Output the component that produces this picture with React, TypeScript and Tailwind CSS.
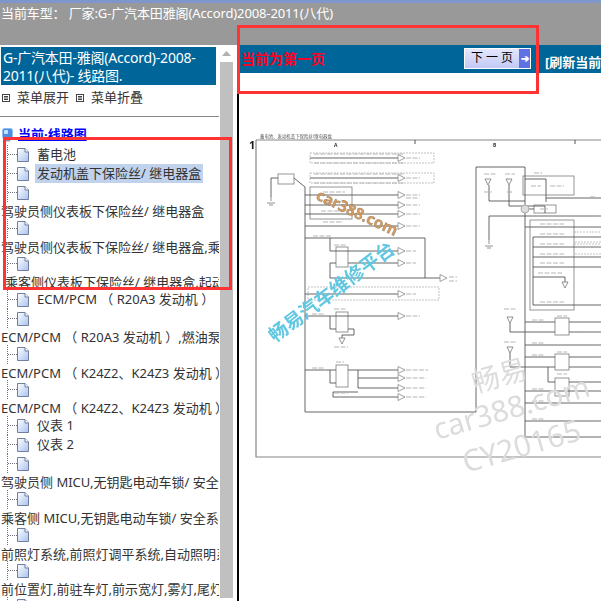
import React from "react";

type Row = {
  text?: string; // label beside the page icon
  below?: string; // long label that drops under the icon
  indent?: string;
  active?: boolean;
};

const rows: Row[] = [
  { text: "蓄电池" },
  { text: "发动机盖下保险丝/ 继电器盒", active: true },
  { below: "驾驶员侧仪表板下保险丝/ 继电器盒" },
  { below: "驾驶员侧仪表板下保险丝/ 继电器盒,乘客侧仪表板" },
  { below: "乘客侧仪表板下保险丝/ 继电器盒,起动机", indent: "pl-[5px]" },
  { text: "ECM/PCM （ R20A3 发动机 ）" },
  { below: "ECM/PCM （ R20A3 发动机 ）,燃油泵" },
  { below: "ECM/PCM （ K24Z2、K24Z3 发动机 ）" },
  { below: "ECM/PCM （ K24Z2、K24Z3 发动机 ）,燃油泵" },
  { text: "仪表 1" },
  { text: "仪表 2" },
  { below: "驾驶员侧 MICU,无钥匙电动车锁/ 安全系统" },
  { below: "乘客侧 MICU,无钥匙电动车锁/ 安全系统" },
  { below: "前照灯系统,前照灯调平系统,自动照明系统" },
  { below: "前位置灯,前驻车灯,前示宽灯,雾灯,尾灯" },
  {},
];

const PageIcon = () => (
  <svg width="12" height="14" viewBox="0 0 12 14" className="shrink-0">
    <defs>
      <linearGradient id="pg" x1="0" y1="0" x2="1" y2="1">
        <stop offset="0" stopColor="#ffffff" />
        <stop offset="1" stopColor="#a9c2f0" />
      </linearGradient>
    </defs>
    <path d="M0.5 0.5H8L11.5 4V13.5H0.5Z" fill="url(#pg)" stroke="#6f7f9c" />
    <path d="M8 0.5V4H11.5" fill="#ffffff" stroke="#6f7f9c" />
  </svg>
);

const BoxIcon = () => (
  <svg width="8" height="8" viewBox="0 0 8 8" className="shrink-0">
    <rect x="0.5" y="0.5" width="7" height="7" fill="#fff" stroke="#444" />
    <path d="M2 2.5H6M2 4H6M2 5.5H6" stroke="#444" />
  </svg>
);

const RootIcon = () => (
  <svg width="11" height="14" viewBox="0 0 11 14" className="shrink-0">
    <rect x="0.5" y="0.5" width="10" height="10" rx="2" fill="#4c8fe0" stroke="#8fbcf0" />
    <rect x="2" y="2" width="4" height="4" rx="1" fill="#c4e0fb" />
    <path d="M2 10.5L4 13.5H8L9 10.5Z" fill="#8a9bb0" />
  </svg>
);

// wires of the schematic, in page coordinates
const darkWires = [
  "M277 178H270V197",
  "M293 178L304 187V412H475V167H524V437H601",
  "M309 158H397M309 178H397",
  "M304 195H397M304 205H397M304 214H397M304 226H397",
  "M304 238H424V278H329V263H335M329 238V251H397M347 263H397M424 278H439",
  "M304 294H397M304 316H397M329 316V329H335M347 329H353V335H341V338",
  "M304 370H335M329 370V383H335M347 370H397M357 370V388H397M357 378H397M332 397H397M332 397V392H357",
  "M488 185V201H524M508 185V206H544V213M524 179H545V202M545 198H601",
  "M524 209H533M488 240V216H601M524 227H601M532 237H601M532 247H601M532 257H601M532 267H601M532 277H564V282M532 305H601M532 237V305",
  "M509 323V332H554M524 322H554M568 322H601M568 332H601M524 345H601",
  "M509 353V367H554M524 357H554M568 357H601M568 367H601M547 367V382H554M568 382H601M524 391H601M524 403H601M524 421H601",
];

const boxes = [
  [277, 174, 16, 10],
  [309, 187, 42, 32],
  [335, 247, 12, 20],
  [335, 312, 12, 20],
  [335, 365, 12, 22],
  [522, 176, 51, 19],
  [533, 205, 22, 8],
  [529, 220, 44, 90],
  [554, 318, 14, 17],
  [554, 354, 14, 16],
  [554, 378, 14, 18],
];

const dashed = [
  [309, 153, 124, 10],
  [309, 173, 124, 10],
  [307, 287, 131, 13],
  [537, 232, 64, 10],
  [537, 244, 64, 10],
];

// connector arrows at the right of the left block
const arrows = [
  [397, 158], [397, 178], [397, 195], [397, 205], [397, 214], [397, 226],
  [397, 251], [397, 263], [397, 294], [397, 316], [397, 370], [397, 378],
  [397, 388], [397, 397], [439, 278],
];

const grounds = [
  [341, 338], [564, 282], [487, 179], [508, 179], [509, 317], [509, 347],
];

// the tiny unreadable captions of the drawing are only grey dashes
const captions = [
  [313, 154, 90], [313, 163, 90], [313, 174, 90], [313, 183, 90],
  [322, 192, 22], [322, 202, 24], [320, 211, 22], [322, 222, 20], [312, 236, 18],
  [372, 158, 8], [372, 178, 8], [372, 195, 8], [372, 205, 8], [372, 214, 8], [372, 226, 8], [372, 238, 8],
  [405, 158, 14], [405, 178, 14], [405, 195, 14], [405, 198, 12], [405, 205, 14], [405, 214, 14], [405, 226, 14],
  [405, 251, 10], [405, 263, 10], [405, 294, 10], [405, 316, 14], [405, 370, 22], [405, 378, 20], [405, 388, 20], [405, 397, 20],
  [311, 314, 12], [311, 368, 12], [333, 393, 14], [333, 245, 12], [333, 309, 12], [335, 362, 8],
  [333, 347, 14], [448, 277, 8], [448, 281, 8],
  [483, 174, 12], [504, 174, 10], [533, 173, 8], [530, 186, 10], [549, 186, 14],
  [483, 192, 8], [506, 192, 6], [539, 209, 8], [590, 216, 8], [589, 197, 6],
  [539, 224, 24], [539, 234, 24], [539, 244, 24], [539, 254, 24], [539, 263, 24], [537, 273, 24], [539, 302, 24],
  [503, 309, 12], [503, 342, 12], [531, 320, 12], [531, 343, 12], [531, 355, 12], [531, 389, 12], [531, 401, 12], [531, 419, 12],
  [556, 316, 10], [556, 352, 10], [556, 374, 10], [590, 322, 8], [590, 332, 8], [590, 345, 8], [590, 357, 8], [590, 367, 8], [590, 382, 8], [590, 391, 8], [590, 403, 8], [590, 421, 8],
];

const Diagram = () => (
  <svg
    width="363"
    height="508"
    viewBox="238 93 363 508"
    className="block blur-[0.5px]"
  >
    <text x="259" y="138" fontSize="4.4" fill="#555">
      蓄电池、发动机盖下保险丝/继电器盒
    </text>
    <path d="M255 140H601M255 140V457H601" fill="none" stroke="#888" strokeWidth="1.2" />
    <text x="248" y="149" fontSize="11" fontWeight="700" fill="#222">1</text>
    <text x="333" y="147" fontSize="5" fontWeight="700" fill="#333">A</text>
    <text x="492" y="147" fontSize="5" fontWeight="700" fill="#333">B</text>
    <path d="M414 140V144M574 140V144" stroke="#555" />
    {dashed.map(([x, y, w, h]) => (
      <rect key={`${x}-${y}`} x={x} y={y} width={w} height={h} fill="none" stroke="#aaa" strokeWidth="0.7" strokeDasharray="2 1" />
    ))}
    {boxes.map(([x, y, w, h]) => (
      <rect key={`${x}-${y}`} x={x} y={y} width={w} height={h} fill="#fff" stroke="#8a8a8a" strokeWidth="0.9" />
    ))}
    {darkWires.map((d) => (
      <path key={d} d={d} fill="none" stroke="#555" strokeWidth="0.9" />
    ))}
    {arrows.map(([x, y]) => (
      <path key={`${x}-${y}`} d={`M${x} ${y - 3.5}L${x + 7} ${y}L${x} ${y + 3.5}Z`} fill="#fff" stroke="#888" strokeWidth="0.8" />
    ))}
    {grounds.map(([x, y]) => (
      <path key={`${x}-${y}`} d={`M${x - 3} ${y}H${x + 3}L${x} ${y + 6}Z`} fill="#fff" stroke="#777" strokeWidth="0.8" />
    ))}
    <circle cx="524" cy="209" r="4" fill="#ddd" stroke="#aaa" />
    <path d="M270 197v4M266 203h8M268 205h4M488 240v4M484 246h8M486 248h4" stroke="#777" strokeWidth="0.8" />
    {captions.map(([x, y, w]) => (
      <path key={`${x}-${y}`} d={`M${x} ${y}h${w}`} stroke="#b5b5b5" strokeWidth="1.2" strokeDasharray="5 1.5" />
    ))}

    {/* watermarks */}
    <text transform="translate(314 199) rotate(25)" fontSize="15.5" fontWeight="700" fill="#d39a5e" stroke="#8a7a6a" strokeWidth="0.3">
      car388.com
    </text>
    <text transform="translate(274 343) rotate(-37)" fontSize="19" fontWeight="700" fill="#62c8e2">
      畅易汽车维修平台
    </text>
    <g fill="#dcdcdc">
      <text transform="translate(474 393) rotate(-16)" fontSize="28">畅易</text>
      <text transform="translate(436 440) rotate(-16)" fontSize="29.5">car388.com</text>
      <text transform="translate(465 473) rotate(-16)" fontSize="30">CY20165</text>
    </g>
  </svg>
);

const TreeRow = ({ row }: { row: Row }) => (
  <div>
    <div className="flex h-[19px] items-center pl-[7px]">
      <div className="h-full w-[1px] border-l border-dotted border-gray-500" />
      <div className="w-[9px] border-t border-dotted border-gray-500" />
      <PageIcon />
      {row.text && (
        <span
          className={`ml-[6px] flex h-[19px] items-center px-[2px] whitespace-nowrap ${
            row.active ? "bg-[#c0d2ec]" : ""
          }`}
        >
          {row.text}
        </span>
      )}
    </div>
    {row.below && (
      <div className={`h-[16.7px] leading-[18px] whitespace-nowrap ${row.indent ?? "pl-[1px]"}`}>
        {row.below}
      </div>
    )}
  </div>
);

const App = () => {
  return (
    <div className="relative flex h-[601px] w-[601px] flex-col overflow-hidden bg-white text-[13px] text-[#333] [font-family:'Noto_Sans','Noto_Sans_CJK_SC',sans-serif]">
      {/* Top strip */}
      <div className="h-[45px] shrink-0 bg-[#999999]">
        <div className="h-[3px] bg-[#7f96cc]" />
        <div className="pt-[2px] pl-[1px] leading-[17px] tracking-[-0.12px] text-white">
          当前车型： 厂家:G-广汽本田雅阁(Accord)2008-2011(八代)
        </div>
      </div>

      <div className="flex min-h-0 flex-1">
        {/* Left menu */}
        <div className="flex w-[237px] shrink-0">
          <div className="w-[219px] shrink-0 overflow-hidden">
            <div className="mt-[2px] ml-[1px] h-[38px] w-[215px] bg-[#006699] pt-[2px] pl-[2px] text-[14px] leading-[18px] tracking-[-0.22px] text-white">
              G-广汽本田-雅阁(Accord)-2008-
              <br />
              2011(八代)- 线路图.
            </div>
            <div className="mt-[3px] flex h-[20px] items-center pl-[2px]">
              <BoxIcon />
              <span className="ml-[7px]">菜单展开</span>
              <span className="ml-[7px]"><BoxIcon /></span>
              <span className="ml-[7px]">菜单折叠</span>
            </div>
            <div className="mt-[8px] h-[1px] bg-[#888888]" />
            <div className="mt-[10px] flex h-[16px] items-center pl-[2px]">
              <RootIcon />
              <span className="ml-[5px] font-bold text-[#0000ff] underline">当前·线路图</span>
            </div>
            <div className="mt-[2px]">
              {rows.map((row, i) => (
                <TreeRow key={i} row={row} />
              ))}
            </div>
          </div>
          {/* Scrollbar */}
          <div className="ml-[1px] flex w-[13px] flex-col items-center">
            <div className="flex h-[17px] items-center text-[#aaa]">
              <svg width="9" height="5" viewBox="0 0 9 5">
                <path d="M4.5 0L9 5H0Z" fill="#b0b0b0" />
              </svg>
            </div>
            <div className="h-[536px] w-full bg-[#c0c0c0]" />
          </div>
        </div>
        <div className="w-[2px] shrink-0 bg-black" />

        {/* Right page */}
        <div className="min-w-0 flex-1 overflow-hidden">
          <div className="flex h-[28px] items-start bg-[#006699] pl-[2px] whitespace-nowrap">
            <span className="mt-[3px] w-[223px] shrink-0 text-[14px] font-bold text-[#ff0022]">当前为第一页</span>
            <button className="mt-[3px] flex h-[21px] w-[67px] shrink-0 items-stretch border border-white bg-gradient-to-b from-[#e4e7fc] to-[#c3c9f5] text-[12px] text-black">
              <span className="flex-1 leading-[18px]">下 一 页</span>
              <span className="flex w-[11px] items-center justify-center bg-[#5f72e4] text-[10px] font-bold text-white">➔</span>
            </button>
            <span className="mt-[8px] ml-[14px] font-bold text-white">[刷新当前页]</span>
          </div>
          <div className="h-[20px]" />
          <Diagram />
        </div>
      </div>

      {/* Red annotation frames drawn over the screenshot */}
      <div className="absolute top-[25px] left-[237px] h-[69px] w-[302px] border-[3px] border-[#ff3333]" />
      <div className="absolute top-[137px] left-[3px] h-[153px] w-[229px] border-[3px] border-[#ff3333]" />
    </div>
  );
};

export default App;
